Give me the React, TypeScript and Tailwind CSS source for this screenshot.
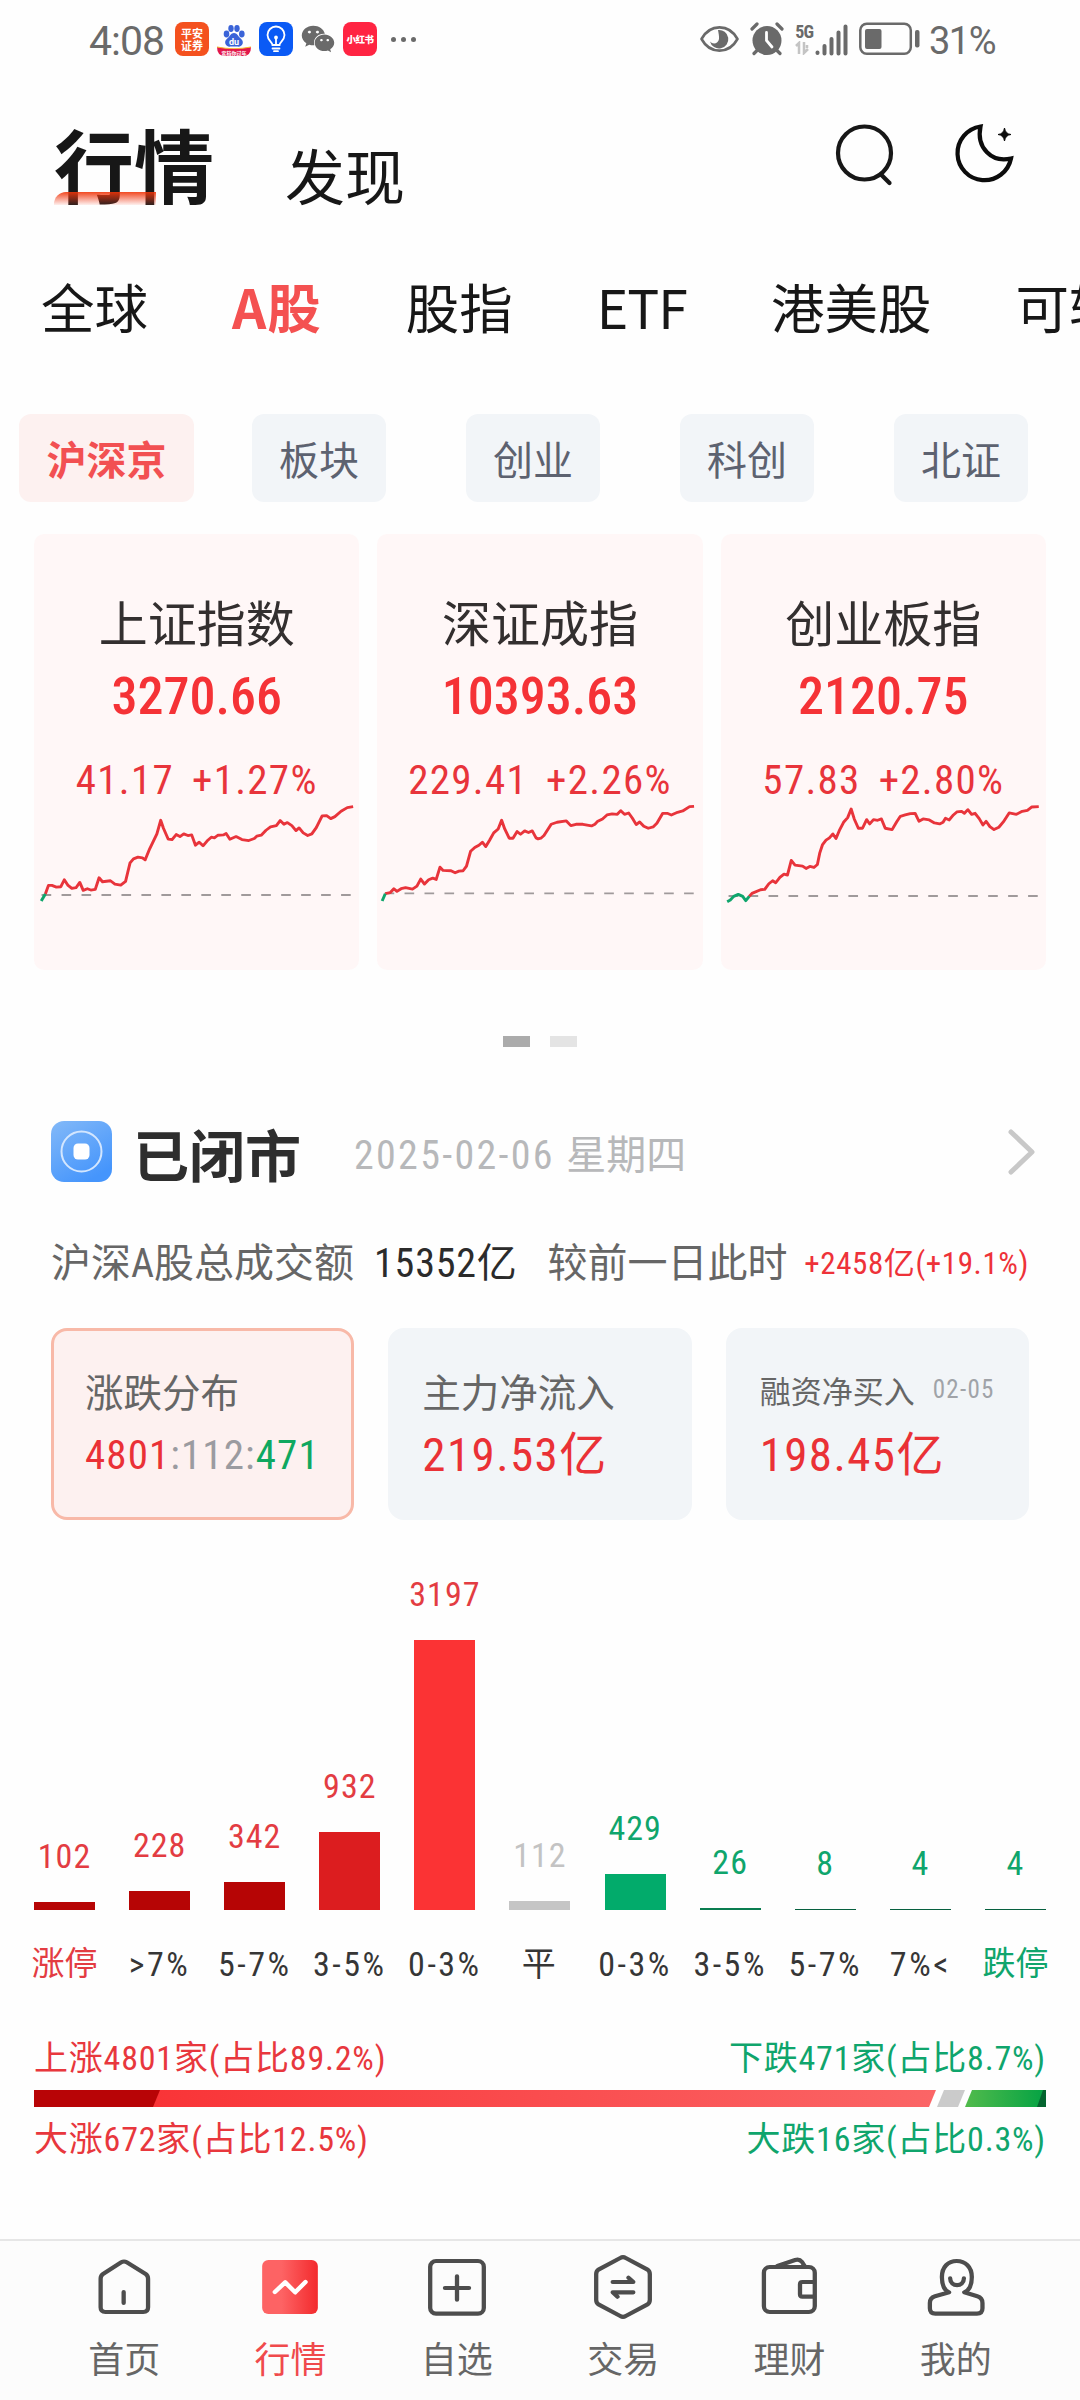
import type { ReactNode } from 'react';
import { FaWeixin } from 'react-icons/fa';
import clsx from 'clsx';

const NUM = "font-['Roboto_Condensed','Noto_Sans_CJK_SC',sans-serif]";

const TABS = ['全球', 'A股', '股指', 'ETF', '港美股', '可转债'];
const CHIPS = ['沪深京', '板块', '创业', '科创', '北证'];

const INDEXES = [
  {
    name: '上证指数',
    value: '3270.66',
    change: '41.17',
    percent: '+1.27%',
    base: 277,
    down: '21,295 33,274',
    up: '33,274 42,248 52,248 65,253 78,252 88,231 98,247 110,257 122,255 133,239 143,263 155,258 165,262 178,260 189,225 199,237 222,234 235,244 252,247 266,236 272,210 279,180 289,168 302,163 315,165 323,171 336,138 357,93 368,52 376,76 390,109 401,110 413,95 424,101 435,93 447,98 458,96 469,127 480,118 491,129 505,112 515,103 524,105 534,97 550,96 558,92 569,109 587,101 604,110 624,113 640,107 647,100 660,97 674,82 687,72 704,68 715,53 726,64 736,59 749,68 761,83 770,75 782,90 795,98 807,93 820,74 837,39 850,38 862,47 874,41 892,25 910,14 927,11',
  },
  {
    name: '深证成指',
    value: '10393.63',
    change: '229.41',
    percent: '+2.26%',
    base: 272,
    down: '15,295 24,273',
    up: '24,273 38,270 49,258 58,266 70,258 83,255 103,259 116,250 127,229 138,244 150,231 162,226 172,230 183,193 192,203 215,204 227,210 238,205 250,204 260,190 272,145 284,134 296,127 306,118 316,131 327,112 339,90 352,78 362,52 371,78 384,106 395,106 407,86 417,94 429,84 440,89 451,84 462,105 468,108 476,106 485,98 506,64 523,58 550,54 563,68 578,64 598,64 623,69 633,64 640,56 655,48 668,36 683,33 698,34 708,23 719,34 731,30 742,46 753,65 763,57 775,70 788,76 802,72 813,61 830,31 843,31 855,36 873,28 888,24 908,11 921,10',
  },
  {
    name: '创业板指',
    value: '2120.75',
    change: '57.83',
    percent: '+2.80%',
    base: 280,
    down: '18,297 27,292 37,281 50,275 63,281 72,294 82,281',
    up: '82,281 90,272 115,261 127,260 139,243 150,234 159,240 171,224 183,214 193,217 204,173 215,187 237,190 247,197 258,191 270,194 280,185 287,150 295,125 305,112 315,105 325,93 334,107 345,80 356,58 368,44 378,18 387,48 399,76 411,76 423,50 432,63 443,50 455,52 466,48 477,76 497,80 510,57 521,40 535,36 550,32 564,31 575,55 587,48 605,51 620,60 635,63 645,58 652,46 663,51 675,36 685,27 699,25 707,31 717,20 728,34 738,31 750,47 761,66 770,55 781,71 793,80 807,73 820,57 837,30 858,34 875,25 890,22 903,12 923,11',
  },
];

const BUCKETS = [
  { count: 102, label: '涨停', bar: 'h-2 bg-[#b60505]', text: 'text-[#e33c42]', axis: 'text-[#e33c42]' },
  { count: 228, label: '>7%', bar: 'h-[19px] bg-[#b60505]', text: 'text-[#e33c42]' },
  { count: 342, label: '5-7%', bar: 'h-7 bg-[#b60505]', text: 'text-[#e33c42]' },
  { count: 932, label: '3-5%', bar: 'h-[78px] bg-[#dc1d1f]', text: 'text-[#e33c42]' },
  { count: 3197, label: '0-3%', bar: 'h-[270px] bg-[#fb3334]', text: 'text-[#e33c42]' },
  { count: 112, label: '平', bar: 'h-[9px] bg-[#c5c5c5]', text: 'text-[#c3c3c3]' },
  { count: 429, label: '0-3%', bar: 'h-9 bg-[#02ab6b]', text: 'text-[#0fa56c]' },
  { count: 26, label: '3-5%', bar: 'h-0.5 bg-[#0a7d50]', text: 'text-[#0fa56c]' },
  { count: 8, label: '5-7%', bar: 'h-px bg-[#07603f]', text: 'text-[#0fa56c]' },
  { count: 4, label: '7%<', bar: 'h-px bg-[#07603f]', text: 'text-[#0fa56c]' },
  { count: 4, label: '跌停', bar: 'h-px bg-[#07603f]', text: 'text-[#0fa56c]', axis: 'text-[#0fa56c]' },
];

const StatusBar = () => (
  <div className="flex h-20 shrink-0 items-center pb-0.5 pl-[89px] pr-[85px] text-[#6a6a6a]">
    <span className="w-[86px] pt-1 font-['Roboto'] text-[41px] leading-none tracking-[-1px]">4:08</span>
    <div className="flex items-center gap-2">
      <div className="flex h-[34px] w-[34px] flex-col items-center justify-center rounded-lg bg-[#f4511e] text-[11px] font-bold leading-[12px] text-white">
        <span>平安</span>
        <span>证券</span>
      </div>
      <svg width="34" height="34" viewBox="0 0 34 34">
        <g fill="#3a63d8">
          <ellipse cx="9.5" cy="12" rx="2.8" ry="3.4" />
          <ellipse cx="14" cy="6.5" rx="2.7" ry="3.4" />
          <ellipse cx="20" cy="6.5" rx="2.7" ry="3.4" />
          <ellipse cx="24.8" cy="12" rx="2.8" ry="3.4" />
          <path d="M17 11c-3 0-4 3-6.200 5-2.500 2.200-3 3.500-2.500 5.500.6 2.500 3 3.500 5.700 3h6c2.700.5 5.100-.5 5.700-3 .5-2-.2-3.300-2.500-5.500C21 14 20 11 17 11z" />
        </g>
        <text x="17" y="22.500" textAnchor="middle" fill="#fff" fontSize="9" fontWeight="700" fontFamily="Roboto">du</text>
        <path d="M0 25q17 3.500 34 0q0 9-8 9H8q-8 0-8-9z" fill="#e2174b" />
        <path d="M0 24.500q17 3.500 34 0v1q-17 3-34 0z" fill="#f6b92f" />
        <text x="17" y="32.500" textAnchor="middle" fill="#fff" fontSize="5" fontWeight="700" fontFamily="Noto Sans CJK SC">定档你过年</text>
      </svg>
      <div className="flex h-[34px] w-[34px] items-center justify-center rounded-lg bg-[#0a5af5]">
        <svg width="22" height="28" viewBox="0 0 22 28" fill="none" stroke="#fff" strokeWidth="1.800" strokeLinecap="round">
          <path d="M7.500 20c0-3-5-4.500-5-10a8.500 8.500 0 0 1 17 0c0 5.500-5 7-5 10z" />
          <path d="M7.500 23.500h7M9 26.200h4M11 13v6" />
          <circle cx="11" cy="12.500" r="1" fill="#fff" />
        </svg>
      </div>
      <FaWeixin className="h-[34px] w-[34px]" />
      <div className="flex h-[34px] w-[34px] items-center justify-center rounded-lg bg-[#ff2442] text-[9.500px] font-black tracking-[-0.5px] text-white">
        小红书
      </div>
    </div>
    <div className="ml-3.5 flex gap-[5px]">
      <i className="size-[5px] rounded-full bg-current" />
      <i className="size-[5px] rounded-full bg-current" />
      <i className="size-[5px] rounded-full bg-current" />
    </div>
    <div className="ml-auto flex items-center">
      <svg width="39" height="28" viewBox="0 0 39 28">
        <path d="M1.500 14C10-1.500 29-1.500 37.500 14C29 29.500 10 29.500 1.500 14z" fill="none" stroke="currentColor" strokeWidth="2.600" strokeLinejoin="round" />
        <path d="M18 5a9.300 9.300 0 1 1-8 11.500c3 3.500 8.500 2 9-2.500C19.300 11 18.500 8 18 5z" fill="currentColor" />
      </svg>
      <svg className="ml-[11px]" width="34" height="34" viewBox="0 0 34 34">
        <circle cx="17" cy="18.500" r="14.500" fill="currentColor" />
        <path d="M2 7l5-5M32 7l-5-5M4 31.500l3-3M30 31.500l-3-3" stroke="currentColor" strokeWidth="3.200" strokeLinecap="round" />
        <path d="M16.500 10.500v8l5.500 6.500" fill="none" stroke="#fff" strokeWidth="2.800" strokeLinecap="round" />
      </svg>
      <div className="ml-[11px] flex flex-col items-start">
        <span className="font-['Roboto_Condensed'] text-[18px] font-bold leading-[18px] tracking-[-1px]">5G</span>
        <svg width="14" height="14" viewBox="0 0 14 14" fill="none" stroke="#c4c4c4" strokeWidth="2.500">
          <path d="M1 5l3-3v11M9 1v11l4-4M12 4v3" />
        </svg>
      </div>
      <svg className="ml-0.5" width="33" height="34" viewBox="0 0 33 34" stroke="currentColor" strokeWidth="4" strokeLinecap="round">
        <path d="M2.500 30.500v.5M9.500 24v7.500M16.500 17v14.500M23.500 10.500v21M30.500 4.500v27" />
      </svg>
      <svg className="ml-[11px]" width="62" height="34" viewBox="0 0 62 34">
        <rect x="1.300" y="1.800" width="50.500" height="30" rx="6.500" fill="none" stroke="currentColor" strokeWidth="2.500" />
        <rect x="6" y="7" width="16.500" height="20" rx="2" fill="currentColor" />
        <rect x="56" y="8" width="4.500" height="17.500" rx="2" fill="currentColor" />
      </svg>
      <span className="ml-2 pt-1 font-['Roboto'] text-[38px] leading-none tracking-[-1.5px]">31%</span>
    </div>
  </div>
);

const Header = () => (
  <header className="flex h-40 shrink-0 items-start pl-[54px] pr-16 pt-[42px] text-[#171717]">
    <h1 className="relative text-[80px] font-bold leading-[80px]">
      行情
      <span className="absolute left-0 top-[70px] h-[13px] w-[102px] rounded-tl-xl bg-linear-to-b from-[#f03508]/90 to-[#ff6a50]/10" />
    </h1>
    <span className="ml-[71px] mt-[22px] text-[60px] leading-[60px]">发现</span>
    <svg className="ml-auto" width="60" height="64" viewBox="0 0 60 64" fill="none" stroke="currentColor" strokeWidth="4.200" strokeLinecap="round">
      <circle cx="29.500" cy="31" r="26.500" />
      <path d="M46 52.500l8.500 8.500" />
    </svg>
    <svg className="ml-[59px]" width="62" height="64" viewBox="0 0 62 64" fill="none" stroke="#0c0c0c" strokeWidth="4.200">
      <path d="M26.500 4.500A27 27 0 1 0 57 36.500C38 41 22 26 26.500 4.500z" />
      <path d="M50.500 6Q51.500 12 57 12.500Q51.500 13 50.500 19Q49.500 13 44 12.500Q49.500 12 50.500 6z" fill="#0c0c0c" stroke="#0c0c0c" strokeWidth="1" />
    </svg>
  </header>
);

const IndexCard = ({ name, value, change, percent, base, down, up }: (typeof INDEXES)[number]) => (
  <div className={clsx(NUM, 'flex flex-col items-center rounded-[10px] bg-[#fff7f7] pt-[57px] text-[#e8343b]')}>
    <div className="font-['Noto_Sans_CJK_SC'] text-[49px] leading-[60px] text-[#332f2f]">{name}</div>
    <div className="mt-4 text-[52px] font-medium leading-[60px] text-[#f53236]">{value}</div>
    <div className="mt-7 flex gap-[18px] text-[41px] leading-[50px] tracking-[1.3px]">
      <span>{change}</span>
      <span>{percent}</span>
    </div>
    <svg
      className="-mt-0.5 h-[103px] w-full"
      viewBox="0 0 945 310"
      preserveAspectRatio="none"
      fill="none"
      strokeWidth="8.500"
      strokeLinejoin="round"
    >
      <path d={`M22 ${base}H922`} stroke="#a09a9b" strokeWidth="6" strokeDasharray="28 30" />
      <polyline points={up} stroke="#e8343b" />
      <polyline points={down} stroke="#0fa56c" />
    </svg>
  </div>
);

const StatCard = ({ active, label, children }: { active?: boolean; label: ReactNode; children: ReactNode }) => (
  <div
    className={clsx(
      'flex flex-col rounded-2xl border-3 pl-[31px] pt-[34px]',
      active ? 'border-[#f8b9a8] bg-[#fdf1f0]' : 'border-[#f2f5f8] bg-[#f2f5f8]',
    )}
  >
    <div className="flex h-[50px] items-center text-[38.500px] leading-[50px] text-[#666]">{label}</div>
    <div className={clsx(NUM, 'mt-[15px] leading-[50px] text-[#ea3136]')}>{children}</div>
  </div>
);

const NavItem = ({ label, active, children }: { label: string; active?: boolean; children: ReactNode }) => (
  <div className={clsx('flex flex-1 flex-col items-center', active ? 'text-[#f04a4c]' : 'text-[#666]')}>
    <svg
      width="66"
      height="64"
      viewBox="0 0 192 192"
      preserveAspectRatio="none"
      fill="none"
      stroke="#4d4d4d"
      strokeWidth="12.500"
      strokeLinecap="round"
      strokeLinejoin="round"
    >
      {children}
    </svg>
    <span className="mt-[18px] text-[36px] leading-10">{label}</span>
  </div>
);

const App = () => {
  return (
    <div className="flex h-[2400px] w-[1080px] flex-col overflow-hidden bg-[#fefefe] font-['Noto_Sans_CJK_SC',sans-serif]">
      <StatusBar />
      <Header />

      <div className="mt-9 flex gap-[84px] whitespace-nowrap pl-[41px] text-[53.500px] leading-[60px] text-[#171717]">
        {TABS.map((tab) => (
          <span
            key={tab}
            className={clsx('shrink-0', tab === 'A股' && 'font-bold tracking-[1px] text-[#f45151]', tab === 'ETF' && 'tracking-[-1px]')}
          >
            {tab}
          </span>
        ))}
      </div>

      <div className="mt-[78px] flex shrink-0 pl-[19px] text-[40px]">
        {CHIPS.map((chip, i) => (
          <div
            key={chip}
            className={clsx(
              'flex h-[88px] shrink-0 items-center justify-center rounded-xl',
              i === 0 ? 'mr-[58px] w-[175px] bg-[#fdf1f0] font-bold text-[#f25052]' : 'mr-20 w-[134px] bg-[#f2f5f8] text-[#5d6270]',
            )}
          >
            {chip}
          </div>
        ))}
      </div>

      <div className="mt-8 grid h-[436px] grid-cols-3 gap-[18px] px-[34px]">
        {INDEXES.map((item) => (
          <IndexCard key={item.name} {...item} />
        ))}
      </div>

      <div className="mt-[66px] flex justify-center gap-5">
        <i className="h-[11px] w-[27px] bg-[#ababab]" />
        <i className="h-[11px] w-[27px] bg-[#e4e4e4]" />
      </div>

      {/* Market status */}
      <div className="mt-[74px] flex h-[61px] items-center pl-[51px] pr-[43px]">
        <svg width="61" height="61" viewBox="0 0 61 61">
          <defs>
            <linearGradient id="marketIcon" x1="0" y1="0" x2="0.600" y2="1">
              <stop offset="0" stopColor="#83b9f8" />
              <stop offset="1" stopColor="#4595fc" />
            </linearGradient>
          </defs>
          <rect width="61" height="61" rx="13" fill="url(#marketIcon)" />
          <circle cx="30.500" cy="30.500" r="20" fill="none" stroke="#d3e6fe" strokeWidth="2" />
          <rect x="22.500" y="22.500" width="16" height="16" rx="4.500" fill="#fff" />
        </svg>
        <span className="ml-[21px] pt-0.5 text-[56px] font-bold leading-[61px] text-[#2e2e2e]">已闭市</span>
        <span className={clsx(NUM, 'ml-[53px] pt-[7px] text-[40px] leading-[61px] text-[#b7b8ba]')}>
          <span className="tracking-[2.3px]">2025-02-06 </span>星期四
        </span>
        <svg className="ml-auto" width="30" height="48" viewBox="0 0 30 48" fill="none" stroke="#c8c8c8" strokeWidth="5" strokeLinecap="round" strokeLinejoin="round">
          <path d="M4 4l21 20L4 44" />
        </svg>
      </div>

      <div className={clsx(NUM, 'mt-[52px] flex whitespace-nowrap pl-[51px] pr-[51px] text-[40px] leading-[60px] text-[#666]')}>
        <span>沪深A股总成交额</span>
        <span className="ml-5 tracking-[0.8px] text-[#2b2b2b]">15352亿</span>
        <span className="ml-[30px]">较前一日此时</span>
        <span className="ml-auto text-[31px] tracking-[0.6px] text-[#ee3239]">+2458亿(+19.1%)</span>
      </div>

      <div className="mt-[34px] grid h-48 shrink-0 grid-cols-3 gap-[34px] px-[51px]">
        <StatCard active label="涨跌分布">
          <span className="text-[41px] tracking-[1.1px]">
            4801<span className="text-[#9b9ba0]">:112:</span>
            <span className="text-[#0fa860]">471</span>
          </span>
        </StatCard>
        <StatCard label="主力净流入">
          <span className="text-[47px] tracking-[1.4px]">219.53亿</span>
        </StatCard>
        <StatCard
          label={
            <>
              <span className="text-[31px]">融资净买入</span>
              <span className={clsx(NUM, 'ml-[18px] text-[25px] tracking-[1.3px] text-[#a0a3a8]')}>02-05</span>
            </>
          }
        >
          <span className="text-[47px] tracking-[1.4px]">198.45亿</span>
        </StatCard>
      </div>

      {/* Rise / fall distribution */}
      <div className={clsx(NUM, 'flex h-[390px] shrink-0 items-end justify-between px-[34px]')}>
        {BUCKETS.map(({ count, bar, text }, i) => (
          <div key={i} className="flex w-[61px] flex-col items-center">
            <span className={clsx('mb-[26px] text-[34px] leading-10 tracking-[1px]', text)}>{count}</span>
            <div className={clsx('w-full', bar)} />
          </div>
        ))}
      </div>
      <div className={clsx(NUM, 'mt-[34px] flex justify-between px-[34px]')}>
        {BUCKETS.map(({ label, axis }, i) => (
          <div
            key={i}
            className={clsx('flex w-[61px] justify-center whitespace-nowrap leading-10', axis ? 'text-[33px]' : 'text-[34px] tracking-[2.5px] text-[#363636]', axis)}
          >
            {label}
          </div>
        ))}
      </div>

      <div className={clsx(NUM, 'mt-[54px] flex flex-col gap-3 px-[34px] text-[34px] leading-10 tracking-[0.8px]')}>
        <div className="flex justify-between">
          <span className="text-[#e8373d]">上涨4801家(占比89.2%)</span>
          <span className="text-[#0fa56c]">下跌471家(占比8.7%)</span>
        </div>
        <svg width="1012" height="17" viewBox="0 0 1012 17">
          <defs>
            <linearGradient id="rise">
              <stop offset="0" stopColor="#f93437" />
              <stop offset="1" stopColor="#fb6566" />
            </linearGradient>
            <linearGradient id="fall">
              <stop offset="0" stopColor="#52bb4c" />
              <stop offset="1" stopColor="#03a243" />
            </linearGradient>
          </defs>
          <path d="M119 0H902L895 17H119z" fill="url(#rise)" />
          <path d="M0 0H126L119 17H0z" fill="#b80406" />
          <path d="M910 0H931L924 17H903z" fill="#cbcbcb" />
          <path d="M938 0H1012V17H931z" fill="url(#fall)" />
          <path d="M1009 0H1012V17H1003z" fill="#04642f" />
        </svg>
        <div className="flex justify-between">
          <span className="text-[#e8373d]">大涨672家(占比12.5%)</span>
          <span className="text-[#0fa56c]">大跌16家(占比0.3%)</span>
        </div>
      </div>

      <nav className="mt-auto flex h-[161px] shrink-0 border-t-2 border-[#e6e6e6] bg-[#fcfcfc] px-[41px] pt-3.5">
        <NavItem label="首页">
          <path d="M28 71q0-9 7-14L88 22q8-5 16 0l55 35q7 5 7 14v86q0 14-14 14H42q-14 0-14-14z" />
          <path d="M95 111v33" />
        </NavItem>
        <NavItem label="行情" active>
          <defs>
            <linearGradient id="navActive">
              <stop offset="0.350" stopColor="#fd6364" />
              <stop offset="1" stopColor="#f32a2d" />
            </linearGradient>
          </defs>
          <rect x="15" y="15" width="162" height="162" rx="18" fill="url(#navActive)" stroke="none" />
          <path d="M52 111L82 82L111 112L141 81" stroke="#fff" strokeWidth="13" />
        </NavItem>
        <NavItem label="自选">
          <rect x="18" y="18" width="156" height="158" rx="17" />
          <path d="M96 64v70M61 99h70" />
        </NavItem>
        <NavItem label="交易">
          <path d="M88 9q8-5 16 0l62 34q8 5 8 14v78q0 9-8 14l-62 34q-8 5-16 0l-62-34q-8-5-8-14V57q0-9 8-14z" />
          <path d="M66 81h60l-14-13M126 112H66l14 13" />
        </NavItem>
        <NavItem label="理财">
          <rect x="23" y="36" width="148" height="135" rx="17" />
          <path d="M62 33l52-18q12-4 20 6l8 13M169 81h-34q-7 0-7 7v30q0 7 7 7h34" />
        </NavItem>
        <NavItem label="我的">
          <path d="M76 112C62 106 55 88 55 66c0-30 18-48 43-48s44 18 44 48c0 22-7 40-22 46l38 12q15 5 15 20v16q0 16-16 16H36q-16 0-16-16v-16q0-15 15-20z" />
          <path d="M79 70c0 27 40 27 40 0" />
        </NavItem>
      </nav>
    </div>
  );
};

export default App;
